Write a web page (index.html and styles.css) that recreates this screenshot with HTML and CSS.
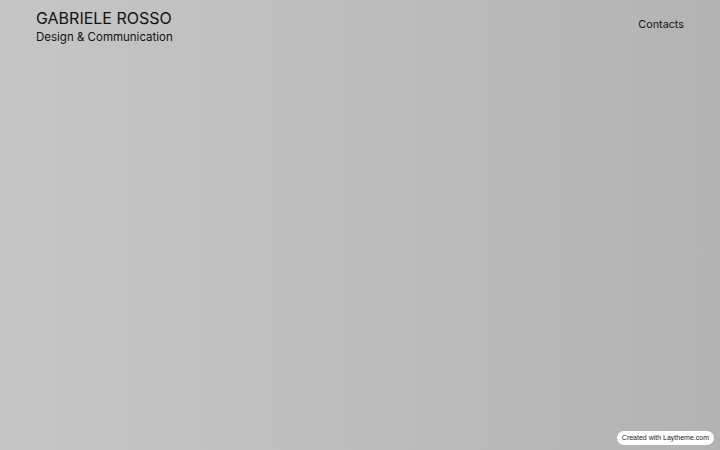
FILE: index.html
```html
<!DOCTYPE html>
<html>
<head>
<meta charset="utf-8">
<link rel="stylesheet" href="styles.css">
</head>
<body>
<header class="site-header">
  <div class="brand">
    <div class="brand-name">GABRIELE ROSSO</div>
    <div class="brand-tag">Design &amp; Communication</div>
  </div>
  <nav class="nav"><span class="nav-link">Contacts</span></nav>
</header>
<div class="badge">Created with Laytheme.com</div>
</body>
</html>
```

FILE: styles.css
```css
html, body {
  margin: 0;
  height: 100%;
}
body {
  background: linear-gradient(to right, #c6c6c6, #b3b3b3);
  font-family: Inter, "Liberation Sans", sans-serif;
  color: #111;
  overflow: hidden;
}
.site-header {
  display: flex;
  justify-content: space-between;
  align-items: flex-start;
  padding: 9px 36px 0 36px;
}
.brand-name {
  font-size: 16px;
  line-height: 18px;
  letter-spacing: 0;
}
.brand-tag {
  font-size: 11.5px;
  line-height: 16px;
  margin-top: 2px;
}
.nav {
  padding-top: 3px;
}
.nav-link {
  font-size: 10.8px;
  line-height: 16px;
  color: #111;
}
.badge {
  position: fixed;
  right: 6px;
  bottom: 5px;
  background: #fff;
  color: #222;
  font-family: "Liberation Sans", Arial, sans-serif;
  font-size: 7px;
  line-height: 14px;
  padding: 0 5px;
  border-radius: 8px;
}
```
